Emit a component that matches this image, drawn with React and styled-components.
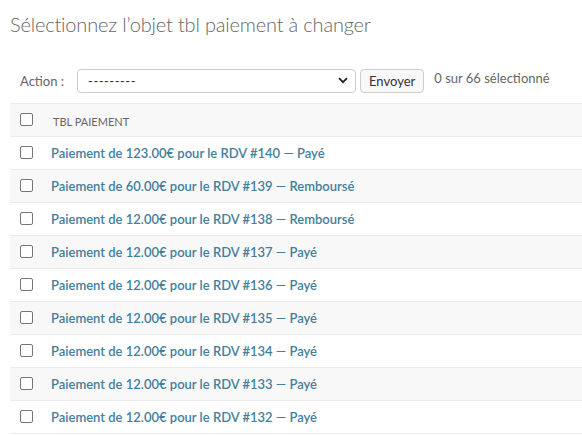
import React from "react";
import styled, { createGlobalStyle } from "styled-components";

const Global = createGlobalStyle`
  html, body { margin: 0; padding: 0; background: #fff; }
  body { font-family: "Segoe UI", "Lato", "Noto Sans", sans-serif; color: #333; }
`;

const Page = styled.div`
  padding: 0 0 0 10px;
  overflow: hidden;
`;

const Title = styled.h1`
  margin: 0;
  padding-top: 11px;
  font-size: 20px;
  font-weight: 300;
  line-height: 26px;
  letter-spacing: -0.18px;
  color: #666;
`;

const Actions = styled.div`
  display: flex;
  align-items: center;
  margin-top: 31px;
  padding-left: 10px;
  height: 25px;
  font-size: 13px;
  color: #666;
`;

const Label = styled.span`
  margin-right: 13px;
`;

const Select = styled.div`
  box-sizing: border-box;
  width: 279px;
  height: 24px;
  border: 1px solid #ccc;
  border-radius: 4px;
  display: flex;
  align-items: center;
  justify-content: space-between;
  padding: 0 7px 0 10px;
  color: #333;
  font-size: 13px;
  letter-spacing: 0.5px;
`;

const Button = styled.div`
  box-sizing: border-box;
  margin-left: 4px;
  height: 24px;
  padding: 0 8px;
  display: flex;
  align-items: center;
  border: 1px solid #ccc;
  border-radius: 4px;
  background: #f8f8f8;
  color: #333;
  font-size: 13px;
`;

const Counter = styled.span`
  margin-left: 10px;
  margin-top: -5px;
  color: #666;
  font-size: 13px;
`;

const Table = styled.div`
  margin-top: 10px;
  border-top: 1px solid #eaeaea;
  width: 600px;
`;

const Row = styled.div`
  display: flex;
  align-items: center;
  box-sizing: border-box;
  height: 33px;
  border-bottom: 1px solid #eaeaea;
  background: ${(p) => (p.$shaded ? "#f8f8f8" : "#fff")};
`;

const Box = styled.span`
  box-sizing: border-box;
  width: 13px;
  height: 13px;
  margin: 0 18px 0 10px;
  border: 1px solid #767676;
  border-radius: 2px;
  background: #fff;
  position: relative;
  top: -1px;
`;

const HeadText = styled.span`
  margin-left: 2px;
  font-size: 11px;
  color: #666;
  text-transform: uppercase;
  position: relative;
  top: 1px;
`;

const Link = styled.a`
  font-size: 13px;
  font-weight: 600;
  color: #447e9b;
  text-decoration: none;
`;

const rows = [
  ["123.00", 140, "Payé"],
  ["60.00", 139, "Remboursé"],
  ["12.00", 138, "Remboursé"],
  ["12.00", 137, "Payé"],
  ["12.00", 136, "Payé"],
  ["12.00", 135, "Payé"],
  ["12.00", 134, "Payé"],
  ["12.00", 133, "Payé"],
  ["12.00", 132, "Payé"],
];

export default function App() {
  return (
    <Page>
      <Global />
      <Title>Sélectionnez l’objet tbl paiement à changer</Title>
      <Actions>
        <Label>Action :</Label>
        <Select>
          <span>---------</span>
          <svg width="10" height="7" viewBox="0 0 10 7">
            <path d="M1 1.2 L5 5.2 L9 1.2" fill="none" stroke="#222" strokeWidth="1.8" />
          </svg>
        </Select>
        <Button>Envoyer</Button>
        <Counter>0 sur 66 sélectionné</Counter>
      </Actions>
      <Table>
        <Row $shaded>
          <Box />
          <HeadText>tbl paiement</HeadText>
        </Row>
        {rows.map(([amt, id, st], i) => (
          <Row key={id} $shaded={i % 2 === 1}>
            <Box />
            <Link href="#">
              Paiement de {amt}€ pour le RDV #{id} — {st}
            </Link>
          </Row>
        ))}
      </Table>
    </Page>
  );
}
